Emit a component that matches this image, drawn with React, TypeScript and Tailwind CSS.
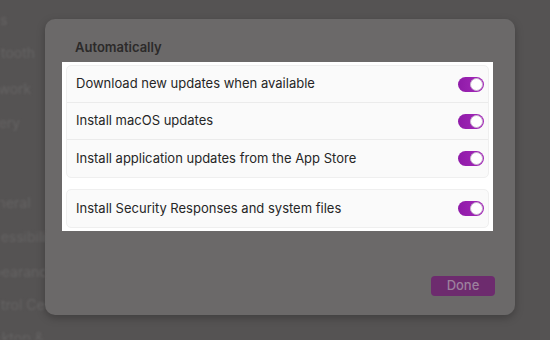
import React from 'react'

const sidebarItems = [
  { label: 'Notifications', shift: '-ml-[76px]', h: 'h-[33px]' },
  { label: 'Bluetooth', shift: '-ml-[28px]', h: 'h-[36px]' },
  { label: 'Network', shift: '-ml-[25px]', h: 'h-[34px]' },
  { label: 'Battery', shift: '-ml-[27px]', h: 'h-[80px]' },
  { label: 'General', shift: '-ml-[21px]', h: 'h-[34px]' },
  { label: 'Accessibility', shift: '-ml-[25px]', h: 'h-[35px]' },
  { label: 'Appearance', shift: '-ml-[25px]', h: 'h-[33px]' },
  { label: 'Control Center', shift: '-ml-[26px]', h: 'h-[33px]' },
  { label: 'Desktop & Dock', shift: '-ml-[24px]', h: 'h-[33px]' },
]

function Toggle() {
  return (
    <div className="flex h-[15px] w-[26px] items-center justify-end rounded-full bg-gradient-to-r from-[#8f1aa8] to-[#a62bbb] p-[1px]">
      <div className="h-[13px] w-[13px] rounded-full border border-[#c9b4cf] bg-white" />
    </div>
  )
}

function Row({ label, last }: { label: string; last?: boolean }) {
  return (
    <div
      className={`flex h-[37px] items-center justify-between pl-[9px] pr-[4px] ${
        last ? '' : 'border-b border-[#ebebeb]'
      }`}
    >
      <span className="text-[13px] text-[#262626]">{label}</span>
      <Toggle />
    </div>
  )
}

export default function App() {
  return (
    <div
      className="flex h-[340px] w-[550px] overflow-hidden bg-[#555353]"
      style={{ fontFamily: 'Inter, "Liberation Sans", sans-serif' }}
    >
      {/* blurred sidebar behind the sheet */}
      <div className="flex w-[45px] shrink-0 flex-col overflow-hidden pt-[10px] blur-[0.8px]">
        {sidebarItems.map((item, i) => (
          <div
            key={i}
            className={`${item.h} shrink-0 whitespace-nowrap text-[14px] leading-[20px] text-[#656363] ${item.shift}`}
          >
            {item.label}
          </div>
        ))}
      </div>

      {/* sheet */}
      <div className="mt-[19px] flex h-[296px] w-[470px] shrink-0 flex-col rounded-[10px] bg-[#6b6969] shadow-[0_3px_8px_rgba(0,0,0,0.25)]">
        <div className="pl-[30px] pt-[20px] text-[13px] font-semibold leading-[16px] text-[#2c2a2a]">
          Automatically
        </div>

        <div className="ml-[17px] mt-[7px] flex h-[169px] w-[431px] flex-col gap-[11px] bg-white px-[4px] pt-[3px]">
          <div className="rounded-[5px] border border-[#efefef] bg-[#fafafa]">
            <Row label="Download new updates when available" />
            <Row label="Install macOS updates" />
            <Row label="Install application updates from the App Store" last />
          </div>
          <div className="rounded-[5px] border border-[#efefef] bg-[#fafafa]">
            <Row label="Install Security Responses and system files" last />
          </div>
        </div>

        <div className="flex flex-1 items-end justify-end pb-[19px] pr-[20px]">
          <button className="flex h-[20px] w-[64px] items-center justify-center rounded-[4px] bg-[#6d2b6e] text-[13px] font-medium text-[#9c809d]">
            Done
          </button>
        </div>
      </div>
    </div>
  )
}
